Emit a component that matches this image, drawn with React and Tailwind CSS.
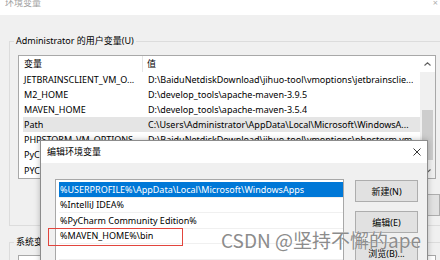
import React from "react";

const FONT = { fontFamily: '"Noto Sans", "Noto Sans CJK SC", sans-serif' };

const rows = [
  ["JETBRAINSCLIENT_VM_O...", "D:\\BaiduNetdiskDownload\\jihuo-tool\\vmoptions\\jetbrainsclie..."],
  ["M2_HOME", "D:\\develop_tools\\apache-maven-3.9.5"],
  ["MAVEN_HOME", "D:\\develop_tools\\apache-maven-3.5.4"],
  ["Path", "C:\\Users\\Administrator\\AppData\\Local\\Microsoft\\WindowsA..."],
  ["PHPSTORM_VM_OPTIONS", "D:\\BaiduNetdiskDownload\\jihuo-tool\\vmoptions\\phpstorm.vm..."],
  ["PyCharm", "D:\\Program Files\\JetBrains\\PyCharm\\bin;"],
  ["PYCHARM_VM_OPTIONS", "D:\\BaiduNetdiskDownload\\jihuo-tool\\vmoptions\\pycharm.vm..."],
];

const paths = [
  "%USERPROFILE%\\AppData\\Local\\Microsoft\\WindowsApps",
  "%IntelliJ IDEA%",
  "%PyCharm Community Edition%",
  "%MAVEN_HOME%\\bin",
  "",
];

function Btn({ children }) {
  return (
    <div className="h-[22px] w-[63px] flex items-center justify-center border border-[#adadad] bg-[#e1e1e1] text-[9px] text-black leading-none">
      {children}
    </div>
  );
}

export default function App() {
  return (
    <div className="relative w-[440px] h-[260px] overflow-hidden bg-[#f0f0f0] text-black" style={FONT}>
      {/* main window title */}
      <div className="h-[15px] bg-white overflow-hidden flex justify-between">
        <div className="-mt-[3px] pl-[5px] text-[9px] leading-[12px] text-[#a0a0a0]">环境变量</div>
        <div className="-mt-[3px] pr-[2px] text-[9px] leading-[12px] text-[#b0b0b0]">×</div>
      </div>

      <div className="pl-[9px] pt-[26px]">
        {/* user groupbox */}
        <div className="relative h-[185px] border border-r-0 border-[#dcdcdc] pl-[8px] pt-[13px]">
          <div className="absolute -top-[7px] left-[4px] px-[2px] bg-[#f0f0f0] text-[9px] leading-[12px]">
            Administrator 的用户变量(U)
          </div>
          <div className="w-[418px] h-[124px] border border-[#a8a8a8] bg-white flex">
            <div className="flex-1 flex flex-col">
              <div className="h-[16px] flex items-center text-[9px]">
                <div className="w-[124px] h-full flex items-center pl-[5px] border-r border-[#e5e5e5]">变量</div>
                <div className="pl-[4px]">值</div>
              </div>
              {rows.map(([n, v], i) => (
                <div
                  key={i}
                  className={
                    "ml-[4px] h-[15.5px] flex items-center text-[9px] whitespace-nowrap overflow-hidden " +
                    (i === 3 ? "bg-[#e5e5e5]" : "")
                  }
                >
                  <div className="w-[121px] pl-[1px] overflow-hidden">{n}</div>
                  <div className="pl-[4px] overflow-hidden">{v}</div>
                </div>
              ))}
            </div>
            <div className="w-[17px] bg-[#f0f0f0] flex flex-col">
              <div className="h-[16px] bg-white flex items-center justify-center">
                <svg width="7" height="4" viewBox="0 0 7 4">
                  <path d="M0.5 3.5 L3.5 0.8 L6.5 3.5" fill="none" stroke="#606060" strokeWidth="1.1" />
                </svg>
              </div>
              <div className="h-[38px]" />
              <div className="mx-[2px] h-[50px] bg-[#cdcdcd]" />
              <div className="flex-1" />
              <div className="h-[14px] flex items-center justify-center">
                <svg width="7" height="4" viewBox="0 0 7 4">
                  <path d="M0.5 0.5 L3.5 3.2 L6.5 0.5" fill="none" stroke="#606060" strokeWidth="1.1" />
                </svg>
              </div>
            </div>
          </div>
          <div className="flex justify-end gap-[8px] mt-[15px]">
            <Btn>新建(N)...</Btn>
            <Btn>编辑(E)...</Btn>
          </div>
        </div>

        {/* system groupbox */}
        <div className="relative mt-[16px] h-[60px] border border-r-0 border-[#dcdcdc] pl-[8px] pt-[12px]">
          <div className="absolute -top-[7px] left-[4px] px-[2px] bg-[#f0f0f0] text-[9px] leading-[12px]">
            系统变量(S)
          </div>
          <div className="w-[418px] h-[60px] border border-[#a8a8a8] bg-white" />
        </div>
      </div>

      {/* edit dialog */}
      <div className="absolute left-[40px] top-[140px] w-[388px] h-[140px] border border-[#8c8c8c] bg-[#f0f0f0] shadow-[0_0_6px_rgba(0,0,0,0.25)]">
        <div className="h-[22px] bg-white flex items-center justify-between pl-[6px] pr-[6px] text-[9px]">
          <span>编辑环境变量</span>
          <svg width="8" height="8" viewBox="0 0 8 8">
            <path d="M0.5 0.5 L7.5 7.5 M7.5 0.5 L0.5 7.5" stroke="#222" strokeWidth="0.9" />
          </svg>
        </div>
        <div className="flex pl-[14px] pt-[16px] gap-[11px]">
          <div className="w-[289px] h-[100px] border border-[#a8a8a8] bg-white pt-[2px]">
            {paths.map((p, i) => (
              <div
                key={i}
                className={
                  "ml-[3px] h-[15.5px] flex items-center pl-[1px] text-[9px] whitespace-nowrap border-b border-[#f0f0f0] " +
                  (i === 0 ? "bg-[#0078d7] text-white" : "")
                }
              >
                {p}
              </div>
            ))}
          </div>
          <div className="flex flex-col gap-[9px] pt-[1px]">
            <Btn>新建(N)</Btn>
            <Btn>编辑(E)</Btn>
            <Btn>浏览(B)...</Btn>
          </div>
        </div>
      </div>

      {/* red highlight */}
      <div className="absolute left-[48px] top-[228px] w-[135px] h-[18px] border-[1.5px] border-[#e2453d]" />

      {/* watermark */}
      <div
        className="absolute left-[221px] top-[228px] text-[19px] leading-[24px] text-[#8c8c8c] whitespace-nowrap"
        style={{ fontFamily: '"Noto Sans CJK SC", sans-serif', textShadow: "0 0 1px #fff" }}
      >
        CSDN @坚持不懈的ape
      </div>
    </div>
  );
}
